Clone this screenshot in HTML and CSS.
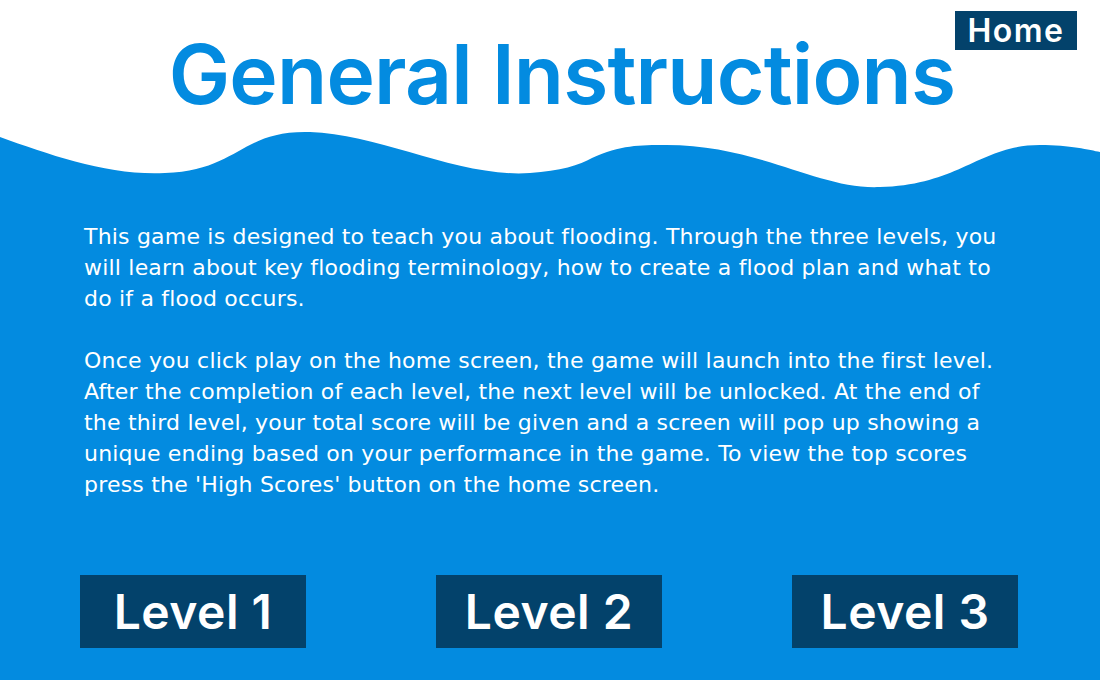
FILE: index.html
```html
<!DOCTYPE html>
<html lang="en">
<head>
<meta charset="utf-8">
<title>General Instructions</title>
<link rel="stylesheet" href="styles.css">
</head>
<body>
<div class="page">
  <header class="header">
    <h1 class="title">General Instructions</h1>
    <a class="home-btn" href="#">Home</a>
  </header>
  <svg class="wave" viewBox="0 128 1100 64" preserveAspectRatio="none" aria-hidden="true">
    <path d="M0 137 C 50 155, 110 176, 165 173 C 240 170, 240 130, 310 132 C 380 134, 460 178, 530 173 C 560 171, 580 165, 592 158 C 620 145, 640 145, 666 145 C 760 145, 820 190, 880 187 C 960 185, 980 145, 1040 145 C 1070 145, 1090 150, 1100 152 L 1100 200 L 0 200 Z" fill="#038be0"/>
  </svg>
  <main class="main">
    <div class="text">
      <p>This game is designed to teach you about flooding. Through the three levels, you will learn about key flooding terminology, how to create a flood plan and what to do if a flood occurs.</p>
      <p>Once you click play on the home screen, the game will launch into the first level. After the completion of each level, the next level will be unlocked. At the end of the third level, your total score will be given and a screen will pop up showing a unique ending based on your performance in the game. To view the top scores press the 'High Scores' button on the home screen.</p>
    </div>
    <nav class="levels">
      <a class="level-btn" href="#">Level 1</a>
      <a class="level-btn" href="#">Level 2</a>
      <a class="level-btn" href="#">Level 3</a>
    </nav>
  </main>
</div>
</body>
</html>
```
FILE: styles.css
```css
* { box-sizing: border-box; }
html, body { margin: 0; padding: 0; }
body {
  width: 1100px;
  height: 680px;
  overflow: hidden;
  background: #038be0;
  font-family: "Inter", "DejaVu Sans", sans-serif;
}
.page {
  position: relative;
  display: flex;
  flex-direction: column;
  height: 680px;
}
.header {
  background: #ffffff;
  height: 128px;
  display: flex;
  justify-content: center;
  align-items: flex-start;
  padding-left: 24px;
}
.title {
  margin: 34px 0 0;
  font-size: 82px;
  font-weight: 600;
  color: #038be0;
  line-height: 82px;
  letter-spacing: -0.8px;
}
.home-btn {
  position: absolute;
  top: 11px;
  left: 955px;
  width: 122px;
  height: 39px;
  background: #03426b;
  color: #ffffff;
  font-size: 32px;
  font-weight: 600;
  letter-spacing: 1.5px;
  text-decoration: none;
  display: flex;
  align-items: center;
  justify-content: center;
}
.wave {
  display: block;
  width: 1100px;
  height: 64px;
  background: #ffffff;
}
.main {
  flex: 1;
  background: #038be0;
  padding: 29px 0 0 84px;
  display: flex;
  flex-direction: column;
}
.text {
  width: 935px;
  color: #ffffff;
  font-family: "DejaVu Sans", sans-serif;
  font-size: 22px;
  line-height: 31px;
  letter-spacing: 0.2px;
}
.text p { margin: 0 0 31px; }
.text p:last-child { margin-bottom: 0; }
.levels {
  margin-top: 75px;
  margin-left: -4px;
  display: flex;
  gap: 130px;
}
.level-btn {
  width: 226px;
  height: 73px;
  background: #03426b;
  color: #ffffff;
  font-size: 48px;
  font-weight: 600;
  letter-spacing: 0.5px;
  text-decoration: none;
  display: flex;
  align-items: center;
  justify-content: center;
}
```
